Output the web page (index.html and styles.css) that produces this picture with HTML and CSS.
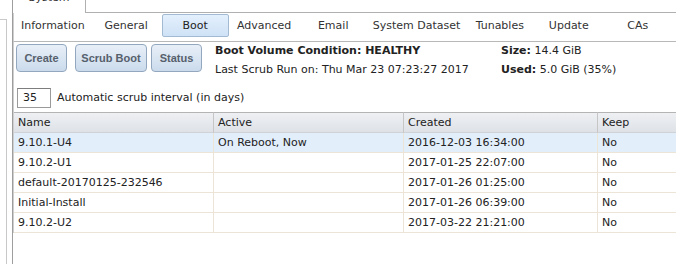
FILE: index.html
```html
<!DOCTYPE html>
<html lang="en">
<head>
  <meta charset="UTF-8" />
  <title>System - Boot</title>
  <link rel="stylesheet" href="styles.css">
</head>
<body>
  <div class="page">
    <div class="sidebar"></div>

    <div class="panel">
      <div class="top-tabs">
        <div class="top-tab">System</div>
        <div class="top-fill"></div>
      </div>

      <div class="tabs">
        <div class="tab tab-info">Information</div>
        <div class="tab">General</div>
        <div class="tab active">Boot</div>
        <div class="tab">Advanced</div>
        <div class="tab">Email</div>
        <div class="tab tab-wide">System Dataset</div>
        <div class="tab">Tunables</div>
        <div class="tab">Update</div>
        <div class="tab">CAs</div>
        <div class="tab">Certificates</div>
      </div>

      <div class="toolbar">
        <button class="btn btn-create">Create</button>
        <button class="btn btn-scrub">Scrub Boot</button>
        <button class="btn btn-status">Status</button>
        <div class="status-info">
          <div class="info-line"><b>Boot Volume Condition: HEALTHY</b></div>
          <div class="info-line">Last Scrub Run on: Thu Mar 23 07:23:27 2017</div>
        </div>
        <div class="size-info">
          <div class="info-line"><b>Size:</b> 14.4 GiB</div>
          <div class="info-line"><b>Used:</b> 5.0 GiB (35%)</div>
        </div>
      </div>

      <div class="interval">
        <input class="interval-input" type="text" value="35">
        <span>Automatic scrub interval (in days)</span>
      </div>

      <table class="grid">
        <thead>
          <tr>
            <th class="col-name">Name</th>
            <th class="col-active">Active</th>
            <th class="col-created">Created</th>
            <th class="col-keep">Keep</th>
          </tr>
        </thead>
        <tbody>
          <tr class="selected">
            <td>9.10.1-U4</td>
            <td>On Reboot, Now</td>
            <td>2016-12-03 16:34:00</td>
            <td>No</td>
          </tr>
          <tr>
            <td>9.10.2-U1</td>
            <td></td>
            <td>2017-01-25 22:07:00</td>
            <td>No</td>
          </tr>
          <tr>
            <td>default-20170125-232546</td>
            <td></td>
            <td>2017-01-26 01:25:00</td>
            <td>No</td>
          </tr>
          <tr>
            <td>Initial-Install</td>
            <td></td>
            <td>2017-01-26 06:39:00</td>
            <td>No</td>
          </tr>
          <tr>
            <td>9.10.2-U2</td>
            <td></td>
            <td>2017-03-22 21:21:00</td>
            <td>No</td>
          </tr>
        </tbody>
      </table>
    </div>
  </div>
</body>
</html>
```

FILE: styles.css
```css
* {
  box-sizing: border-box;
}

body {
  margin: 0;
  font-family: 'DejaVu Sans', Verdana, sans-serif;
  font-size: 11px;
  color: #222;
  background: #fff;
  overflow: hidden;
  width: 676px;
  height: 264px;
}

.page {
  display: flex;
  width: 760px;
  height: 264px;
}

.sidebar {
  width: 7px;
  margin-top: 19px;
  border-top: 1px solid #c9c9c9;
  border-right: 1px solid #c9c9c9;
}

.panel {
  margin-left: 5px;
  width: 740px;
  border-left: 1px solid #9e9e9e;
}

/* outer tab strip, only its bottom shows */
.top-tabs {
  display: flex;
  margin-top: -12px;
  height: 25px;
}

.top-tab {
  width: 73px;
  padding-top: 3px;
  text-align: center;
  color: #333;
  border-right: 1px solid #b0b0b0;
}

.top-fill {
  flex: 1;
  border-bottom: 1px solid #b0b0b0;
}

/* inner tabs */
.tabs {
  display: flex;
  padding: 1px 0 4px 1px;
  border-bottom: 1px solid #b8b8b8;
  border-left: 1px solid #cfcfcf;
}

.tab {
  min-width: 67px;
  height: 23px;
  line-height: 21px;
  padding: 0 5px;
  margin-right: 2px;
  text-align: center;
  white-space: nowrap;
  color: #333;
  border: 1px solid transparent;
  border-radius: 2px;
}

.tab.tab-wide {
  padding: 0 3px;
}

.tab.active {
  background: linear-gradient(#e3effc, #cfe2f6);
  border-color: #a3bad3;
  color: #222;
}

/* toolbar */
.toolbar {
  display: flex;
  align-items: flex-start;
  padding: 2px 0 0 2px;
  border-left: 1px solid #cfcfcf;
}

.btn {
  height: 28px;
  padding: 0;
  white-space: nowrap;
  font-family: 'Liberation Sans', Arial, sans-serif;
  font-size: 11px;
  font-weight: bold;
  color: #56606c;
  background: linear-gradient(#e8eff8, #cbdbec);
  border: 1px solid #93a8bf;
  border-radius: 4px;
}

.btn-create {
  width: 51px;
}

.btn-scrub {
  width: 72px;
  margin-left: 8px;
}

.btn-status {
  width: 51px;
  margin-left: 4px;
}

.status-info {
  margin-left: 13px;
  width: 286px;
}

.info-line {
  height: 19px;
  line-height: 14px;
}

/* scrub interval */
.interval {
  display: flex;
  align-items: center;
  gap: 6px;
  padding: 1px 0 0 3px;
  height: 30px;
  border-left: 1px solid #cfcfcf;
}

.interval-input {
  width: 34px;
  height: 20px;
  padding: 0 5px;
  font-family: 'DejaVu Sans', Verdana, sans-serif;
  font-size: 11px;
  color: #222;
  border: 1px solid #9a9a9a;
  border-top-color: #7d7d7d;
}

/* boot environments grid */
.grid {
  table-layout: fixed;
  border-collapse: separate;
  border-spacing: 0;
  width: 685px;
  border-left: 1px solid #cfcfcf;
}

.grid th {
  height: 21px;
  padding: 0 4px;
  text-align: left;
  font-weight: normal;
  color: #222;
  background: linear-gradient(#eef0f3, #dee2e7);
  border-top: 1px solid #b4b4b4;
  border-bottom: 1px solid #cfd3d8;
  border-right: 1px solid #c6c6c6;
}

.grid td {
  height: 20px;
  padding: 0 4px;
  white-space: nowrap;
  border-bottom: 1px solid #ede4d8;
  border-right: 1px solid #ede4d8;
}

.grid tr.selected td {
  background: #e3eefb;
}

.col-name {
  width: 200px;
}

.col-active {
  width: 190px;
}

.col-created {
  width: 194px;
}

.col-keep {
  width: 101px;
}
```
